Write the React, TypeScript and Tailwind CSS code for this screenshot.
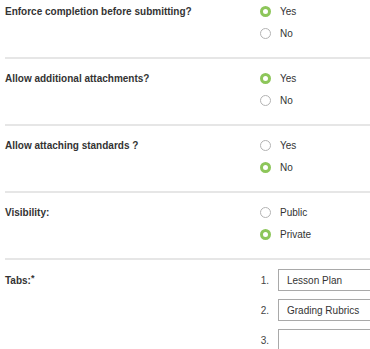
import React from "react";

const font = { fontFamily: '"Liberation Sans", Arial, sans-serif' };

function Radio({ checked, label }: { checked: boolean; label: string }) {
  return (
    <div className="flex h-[22px] items-center">
      <div className="flex w-[21px] justify-start">
        {checked ? (
          <span className="ml-[1px] box-border block h-[11px] w-[11px] rounded-full border-[3px] border-[#8dc65a] bg-white" />
        ) : (
          <span className="ml-[1px] box-border block h-[11px] w-[11px] rounded-full border border-[#b3b3b3] bg-white" />
        )}
      </div>
      <span className="text-[10px] text-[#333]">{label}</span>
    </div>
  );
}

function Row({
  label,
  options,
  checked,
  first,
}: {
  label: string;
  options: string[];
  checked: number;
  first?: boolean;
}) {
  return (
    <div
      className={
        first
          ? "flex pb-[13px]"
          : "flex border-t-2 border-[#e6e6e6] pt-[8px] pb-[13px]"
      }
    >
      <div className="w-[254px] shrink-0 h-[22px] flex items-center text-[10px] font-bold text-[#333]">
        {label}
      </div>
      <div className="flex flex-col">
        {options.map((o, i) => (
          <Radio key={o} label={o} checked={i === checked} />
        ))}
      </div>
    </div>
  );
}

export default function App() {
  return (
    <div className="h-[349px] w-[370px] overflow-hidden bg-white" style={font}>
      <div className="pl-[5px]">
        <Row first label="Enforce completion before submitting?" options={["Yes", "No"]} checked={0} />
        <Row label="Allow additional attachments?" options={["Yes", "No"]} checked={0} />
        <Row label="Allow attaching standards ?" options={["Yes", "No"]} checked={1} />
        <Row label="Visibility:" options={["Public", "Private"]} checked={1} />
        <div className="flex border-t-2 border-[#e6e6e6] pt-[9px]">
          <div className="w-[254px] shrink-0 h-[22px] flex items-center text-[10px] font-bold text-[#333]">
            Tabs:<span className="text-[9px] -mt-[3px]">*</span>
          </div>
          <div className="flex shrink-0 flex-col gap-[8px]">
            {["Lesson Plan", "Grading Rubrics", ""].map((t, i) => (
              <div key={i} className="flex items-center">
                <span className="w-[10px] shrink-0 text-right text-[10px] text-[#444]">{i + 1}.</span>
                <div className="ml-[9px] box-border flex h-[22px] w-[140px] shrink-0 items-center border border-[#a9a9a9] pl-[8px] text-[10px] text-[#333]">
                  {t}
                </div>
              </div>
            ))}
          </div>
        </div>
      </div>
    </div>
  );
}
